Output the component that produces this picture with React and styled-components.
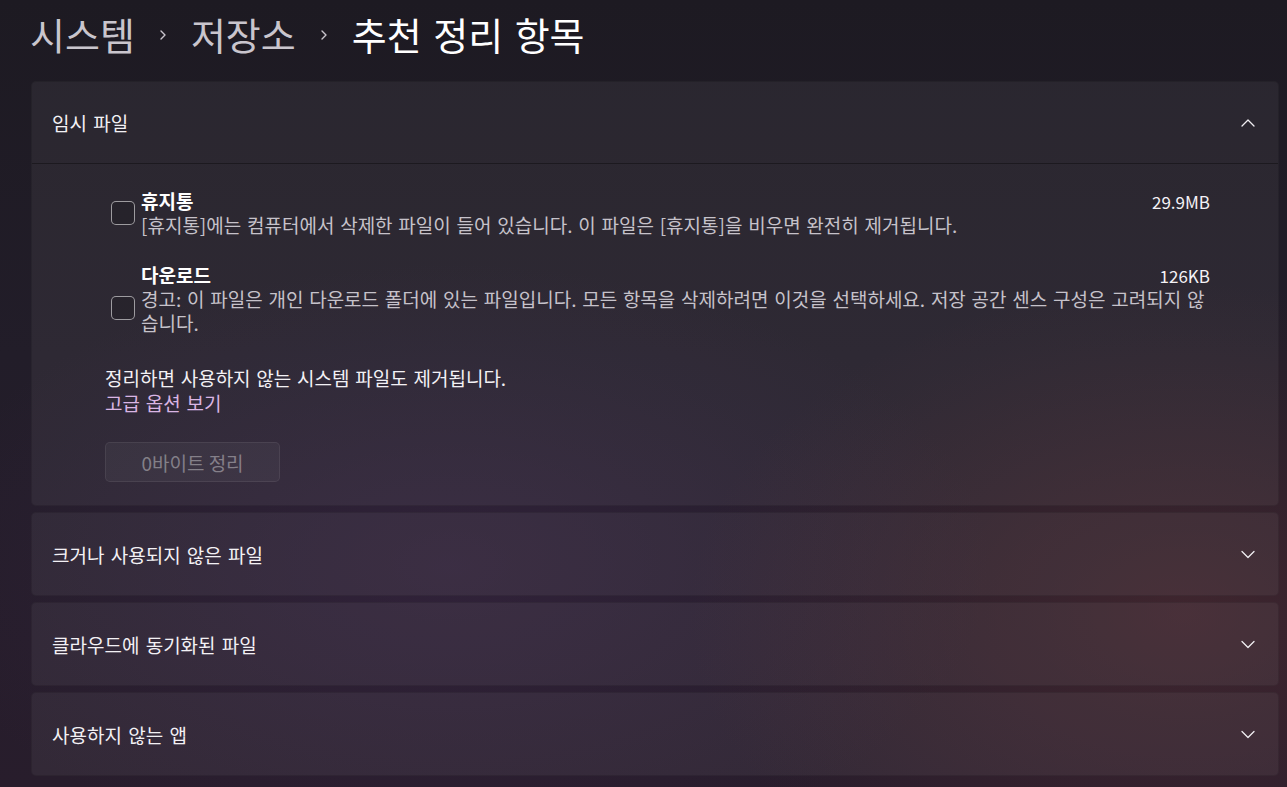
import React from "react";
import styled, { createGlobalStyle } from "styled-components";

const Global = createGlobalStyle`
  html, body { margin: 0; padding: 0; height: 100%; }
  body {
    font-family: "Noto Sans CJK KR", "Noto Sans", sans-serif;
    color: #fff;
    background-color: #201c26;
    background-image:
      radial-gradient(ellipse 55% 60% at 92% 78%, rgba(88, 46, 50, 0.5), transparent 70%),
      radial-gradient(ellipse 60% 55% at 35% 72%, rgba(66, 42, 80, 0.4), transparent 70%),
      linear-gradient(180deg, #1d1a22 0%, #221d29 45%, #281d2c 100%);
    background-attachment: fixed;
    overflow: hidden;
  }
  #root { min-height: 100%; }
`;

const Page = styled.div`
  min-height: 100vh;
  box-sizing: border-box;
  padding: 10px 8px 12px 31px;
  display: flex;
  flex-direction: column;
`;

const Breadcrumb = styled.h1`
  margin: 0 0 0 -1px;
  height: 47px;
  display: flex;
  align-items: center;
  gap: 23px;
  font-size: 38px;
  font-weight: 400;
  line-height: 47px;
  word-spacing: 3px;
`;

const Crumb = styled.span`
  color: ${(p) => (p.$current ? "#ffffff" : "#c9c5cd")};
`;

const Sep = styled.svg`
  width: 10px;
  height: 14px;
  flex: none;
  margin-top: 2px;
`;

const List = styled.div`
  margin-top: 24px;
  display: flex;
  flex-direction: column;
  gap: 6px;
`;

const Card = styled.section`
  background: rgba(255, 255, 255, 0.055);
  border: 1px solid rgba(0, 0, 0, 0.12);
  border-radius: 5px;
  overflow: hidden;
`;

const Header = styled.div`
  height: 82px;
  box-sizing: border-box;
  padding: 0 23px 0 20px;
  display: flex;
  align-items: center;
  justify-content: space-between;
  font-size: 19px;
  word-spacing: 2px;
  color: #f3f1f5;
  border-bottom: ${(p) => (p.$open ? "1px solid rgba(0,0,0,0.35)" : "none")};
`;

const Chevron = styled.svg`
  width: 14px;
  height: 14px;
  flex: none;
`;

const Body = styled.div`
  padding: 25px 68px 23px 73px;
  display: flex;
  flex-direction: column;
  font-size: 19px;
  word-spacing: 1.5px;
`;

const Items = styled.div`
  display: flex;
  flex-direction: column;
  gap: 26px;
  padding-left: 6px;
`;

const Item = styled.div`
  display: grid;
  grid-template-columns: 24px 1fr;
  column-gap: 6px;
  align-items: start;
`;

const Check = styled.span`
  width: 24px;
  height: 24px;
  box-sizing: border-box;
  margin-top: ${(p) => p.$top}px;
  border: 1px solid rgba(255, 255, 255, 0.55);
  border-radius: 5px;
  background: rgba(0, 0, 0, 0.12);
`;

const ItemText = styled.div`
  display: flex;
  flex-direction: column;
`;

const ItemTop = styled.div`
  display: flex;
  justify-content: space-between;
  align-items: center;
  height: 24px;
  line-height: 24px;
`;

const ItemName = styled.span`
  font-weight: 700;
  color: #ffffff;
`;

const Size = styled.span`
  color: #f4f2f6;
  font-size: 17px;
  line-height: 24px;
  padding-top: 2px;
  word-spacing: 0;
`;

const Desc = styled.p`
  margin: 0;
  line-height: 24px;
  color: #c6c2ca;
`;

const Note = styled.p`
  margin: 31px 0 0;
  line-height: 24px;
  color: #f3f1f5;
`;

const Link = styled.a`
  line-height: 24px;
  margin-top: 1px;
  color: #dab5e4;
  text-decoration: none;
  width: fit-content;
`;

const Button = styled.button`
  margin-top: 27px;
  width: 175px;
  height: 40px;
  border-radius: 5px;
  border: 1px solid rgba(255, 255, 255, 0.07);
  background: rgba(255, 255, 255, 0.045);
  color: rgba(255, 255, 255, 0.38);
  font-family: inherit;
  font-size: 19px;
  padding: 0;
`;

const ChevronIcon = ({ up }) => (
  <Chevron viewBox="0 0 14 14">
    <path
      d={up ? "M1 10 L7 4 L13 10" : "M1 4.5 L7 10.5 L13 4.5"}
      fill="none"
      stroke="#f0eef2"
      strokeWidth="1.3"
      strokeLinecap="round"
      strokeLinejoin="round"
    />
  </Chevron>
);

const SepIcon = () => (
  <Sep viewBox="0 0 10 14">
    <path d="M3 3 L7 7 L3 11" fill="none" stroke="#c9c5cd" strokeWidth="1.4" strokeLinecap="round" strokeLinejoin="round" />
  </Sep>
);

const items = [
  {
    name: "휴지통",
    size: "29.9MB",
    desc: "[휴지통]에는 컴퓨터에서 삭제한 파일이 들어 있습니다. 이 파일은 [휴지통]을 비우면 완전히 제거됩니다.",
    top: 12,
  },
  {
    name: "다운로드",
    size: "126KB",
    desc: "경고: 이 파일은 개인 다운로드 폴더에 있는 파일입니다. 모든 항목을 삭제하려면 이것을 선택하세요. 저장 공간 센스 구성은 고려되지 않습니다.",
    top: 33,
  },
];

const collapsed = ["크거나 사용되지 않은 파일", "클라우드에 동기화된 파일", "사용하지 않는 앱"];

export default function App() {
  return (
    <>
      <Global />
      <Page>
        <Breadcrumb>
          <Crumb>시스템</Crumb>
          <SepIcon />
          <Crumb>저장소</Crumb>
          <SepIcon />
          <Crumb $current>추천 정리 항목</Crumb>
        </Breadcrumb>
        <List>
          <Card>
            <Header $open>
              <span>임시 파일</span>
              <ChevronIcon up />
            </Header>
            <Body>
              <Items>
                {items.map((it) => (
                  <Item key={it.name}>
                    <Check $top={it.top} />
                    <ItemText>
                      <ItemTop>
                        <ItemName>{it.name}</ItemName>
                        <Size>{it.size}</Size>
                      </ItemTop>
                      <Desc>{it.desc}</Desc>
                    </ItemText>
                  </Item>
                ))}
              </Items>
              <Note>정리하면 사용하지 않는 시스템 파일도 제거됩니다.</Note>
              <Link href="#">고급 옵션 보기</Link>
              <Button disabled>0바이트 정리</Button>
            </Body>
          </Card>
          {collapsed.map((t) => (
            <Card key={t}>
              <Header>
                <span>{t}</span>
                <ChevronIcon />
              </Header>
            </Card>
          ))}
        </List>
      </Page>
    </>
  );
}
